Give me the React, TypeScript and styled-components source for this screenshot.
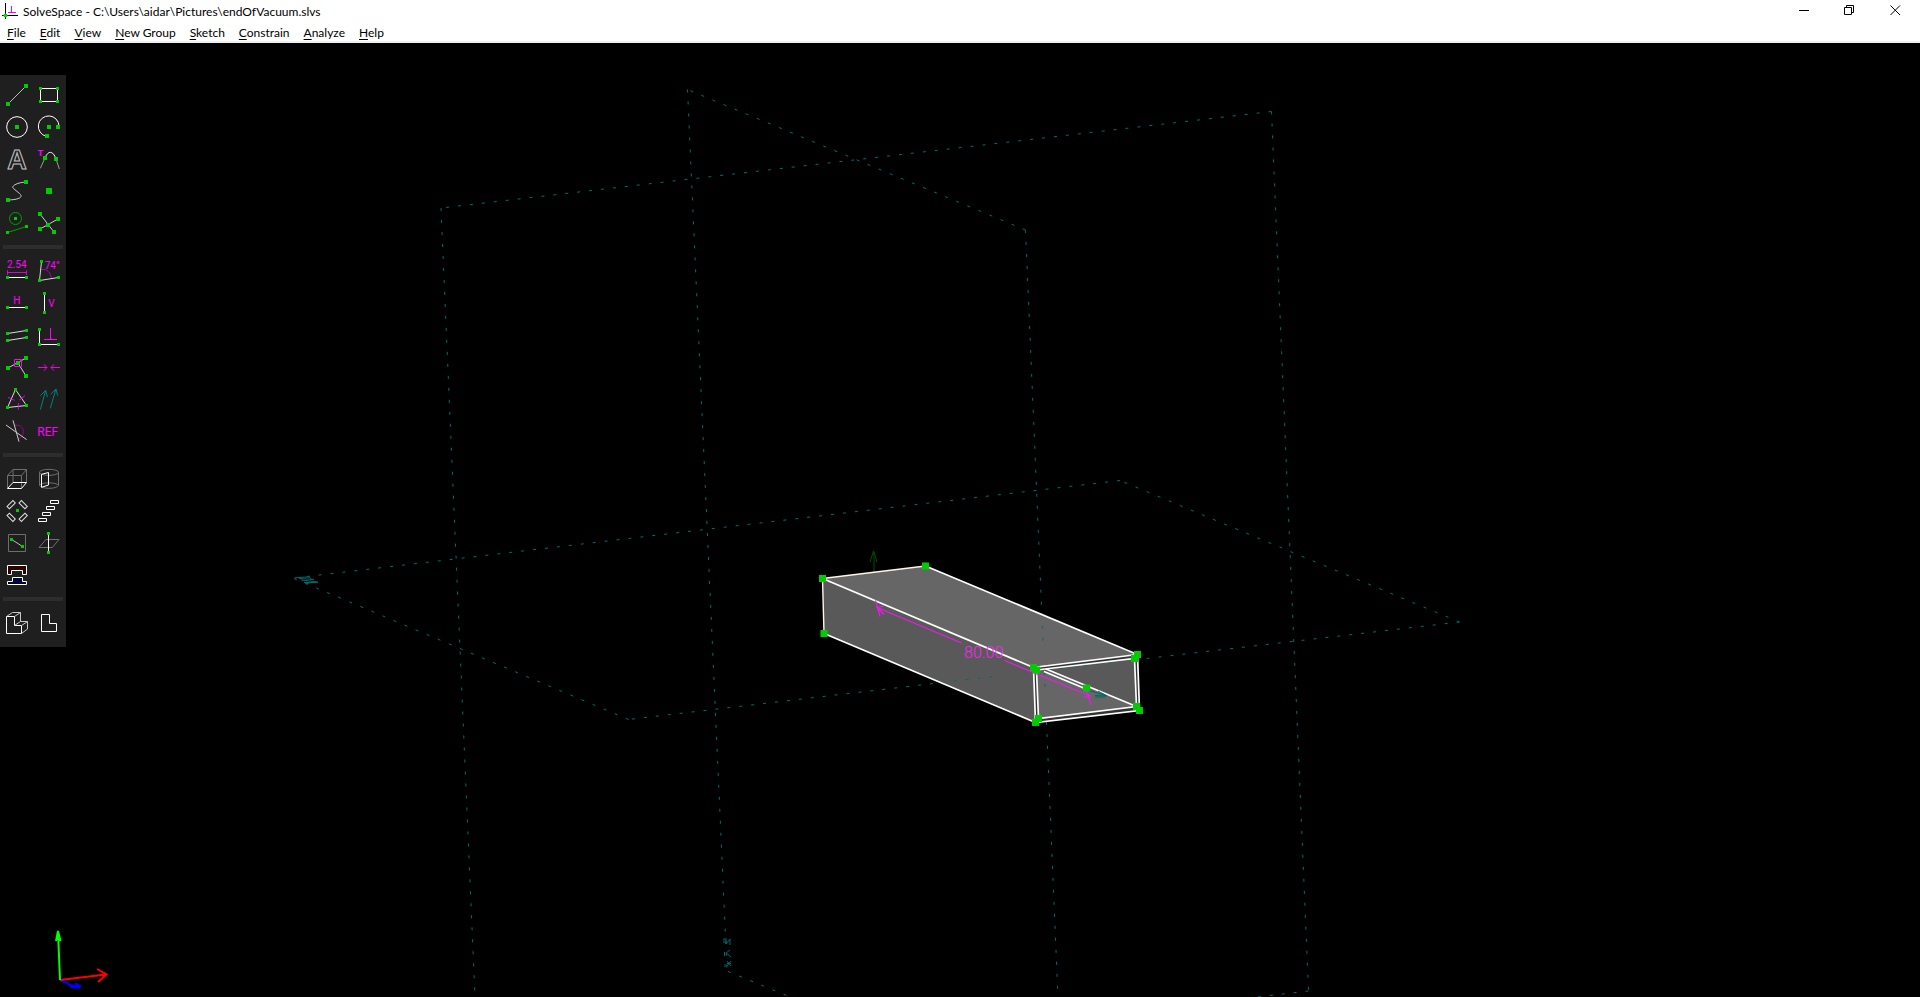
import React from "react";
import styled, { createGlobalStyle } from "styled-components";

const GREEN = "#00cc00";
const MAGENTA = "#ff00ff";
const PURPLE = "#960096";
const TEAL = "#008080";
const GREY = "#6e6e6e";

const GlobalStyle = createGlobalStyle`
  *, *::before, *::after { box-sizing: border-box; }
  body { margin: 0; background: #000; }
  button { font: inherit; color: inherit; background: none; border: 0; padding: 0; }
`;

const Window = styled.div`
  display: flex;
  flex-direction: column;
  min-height: 100vh;
  background: #fff;
  color: #000;
  font-family: Lato, "Open Sans", sans-serif;
  font-size: 12px;
  line-height: 16px;
`;

const TitleBar = styled.header`
  display: flex;
  align-items: center;
  height: 24px;
  padding: 0 2px;
`;

const AppTitle = styled.h1`
  flex: 1;
  margin: 0 0 0 5px;
  font: inherit;
  white-space: nowrap;
`;

const WindowButton = styled.button`
  display: grid;
  place-items: center;
  width: 46px;
  height: 20px;
  margin-bottom: 4px;
`;

const MenuBar = styled.nav`
  display: flex;
  align-items: center;
  height: 19px;
  border-bottom: 2px solid #f0f0f0;
`;

const MenuButton = styled.button`
  padding: 0 7px;
  height: 17px;
  white-space: nowrap;
`;

const AccessKey = styled.span`
  text-decoration: underline;
  text-decoration-thickness: 1px;
  text-underline-offset: 2px;
`;

const Viewport = styled.main`
  position: relative;
  flex: 1;
  display: flex;
  flex-direction: column;
  justify-content: space-between;
  align-items: flex-start;
  gap: 32px;
  padding-top: 32px;
  background: #000;
  overflow: hidden;
`;

const Scene = styled.svg`
  position: absolute;
  inset: 0;
  width: 100%;
  height: 100%;
`;

const Toolbar = styled.div`
  position: relative;
  width: 66px;
  padding: 4px 1px 8px;
  background: #1f1f1f;
`;

const ToolGroup = styled.div`
  display: grid;
  grid-template-columns: 32px 32px;
`;

const Separator = styled.hr`
  height: 4px;
  margin: 6px 2px;
  border: 0;
  background: #2d2d2d;
`;

const ToolButton = styled.button`
  width: 32px;
  height: 32px;

  svg {
    display: block;
  }
`;

const AxisGizmo = styled.svg`
  position: relative;
  display: block;
  margin: 0 0 1px 50px;
`;

/* Tool icons are drawn on a 96-unit grid, three units to a pixel. */

type Pt = [number, number];

const Dots = ({ at, size = 12 }: { at: Pt[]; size?: number }) => (
  <>
    {at.map(([x, y]) => (
      <rect key={`${x},${y}`} x={x - size / 2} y={y - size / 2} width={size} height={size} fill={GREEN} stroke="none" shapeRendering="crispEdges" />
    ))}
  </>
);

const Label = ({ x, y, size = 30, children }: { x: number; y: number; size?: number; children: string }) => (
  <text x={x} y={y} fontSize={size} fontWeight="400" fill={MAGENTA} stroke="none" fontFamily="Roboto, sans-serif">
    {children}
  </text>
);

type Tool = { name: string; icon: React.ReactNode };

const groups: Tool[][] = [
  [
    { name: "Line segment", icon: <><path d="M21 75 75 21" stroke="#bbb" /><Dots at={[[21, 75], [75, 21]]} /></> },
    { name: "Rectangle", icon: <><path d="M22.5 28.5h51v39h-51z" /><Dots size={9} at={[[22.5, 28.5], [73.5, 28.5], [22.5, 67.5], [73.5, 67.5]]} /></> },
    { name: "Circle", icon: <><circle cx="48" cy="48" r="31" /><Dots at={[[48, 48]]} /></> },
    { name: "Arc", icon: <><path d="M78 45A31 31 0 1 0 40 76" /><Dots at={[[48, 48], [75, 48], [42, 75]]} /></> },
    {
      name: "Text in TrueType font",
      icon: (
        <text x="19" y="79" fontSize="81" fontWeight="700" stroke="#c4c4c4" fontFamily="Liberation Sans, sans-serif">
          A
        </text>
      ),
    },
    {
      name: "Tangent arc",
      icon: (
        <>
          <text x="14" y="40" fontSize="27" fontWeight="700" fill={MAGENTA} stroke="none" fontFamily="Liberation Sans, sans-serif">T</text>
          <path d="M22 76 36 45" stroke="#999" />
          <path d="M36 45C45 22 60 22 69 48" />
          <path d="M69 48 79 78" stroke="#999" />
          <Dots at={[[36, 45], [69, 48]]} />
        </>
      ),
    },
    { name: "Bezier spline", icon: <><path d="M75 21C45 23 30 34 37 40L56 56C66 64 60 74 21 75" stroke="#c8c8c8" /><Dots at={[[75, 21], [21, 75]]} /></> },
    { name: "Point", icon: <Dots size={18} at={[[48, 48]]} /> },
    { name: "Toggle construction", icon: <><g stroke="#00a000"><circle cx="43.5" cy="34.5" r="18" /><path d="M19.5 76.5 76.5 58.5" /></g><Dots size={9} at={[[43.5, 34.5], [19.5, 76.5], [76.5, 58.5]]} /></> },
    { name: "Split curves", icon: <><path d="M21 21 63 75M21 66 75 36" stroke="#ccc" /><Dots at={[[21, 21], [75, 36], [21, 66], [63, 75], [45, 54]]} /></> },
  ],
  [
    {
      name: "Distance",
      icon: (
        <>
          <Label x={18} y={40}>2.54</Label>
          <path d="M19.5 52.5h57M19.5 46v14M76.5 46v14" stroke={MAGENTA} strokeOpacity=".8" />
          <path d="M19.5 67.5h57" />
          <Dots size={9} at={[[19.5, 67.5], [76.5, 67.5]]} />
        </>
      ),
    },
    {
      name: "Angle",
      icon: (
        <>
          <path d="M24 44C42 40 54 54 55 71" stroke="#b000b0" />
          <path d="M25.5 19.5 19.5 76.5 76.5 67.5" stroke="#d8d8d8" />
          <Label x={35} y={42}>74°</Label>
          <Dots size={9} at={[[25.5, 19.5], [19.5, 76.5], [76.5, 67.5]]} />
        </>
      ),
    },
    { name: "Horizontal", icon: <><Label x={37} y={52}>H</Label><path d="M19.5 61.5h57" /><Dots size={9} at={[[19.5, 61.5], [76.5, 61.5]]} /></> },
    { name: "Vertical", icon: <><path d="M34.5 19.5v57" /><Label x={46} y={61}>V</Label><Dots size={9} at={[[34.5, 19.5], [34.5, 76.5]]} /></> },
    { name: "Parallel", icon: <><path d="M19.5 43.5 76.5 34.5M19.5 64.5 76.5 55.5" stroke="#ddd" /><Dots size={9} at={[[19.5, 43.5], [76.5, 34.5], [19.5, 64.5], [76.5, 55.5]]} /></> },
    { name: "Perpendicular", icon: <><path d="M19.5 31.5v45h57" /><path d="M52.5 27v34.5M33 61.5h39" stroke={MAGENTA} /><Dots size={9} at={[[19.5, 31.5], [19.5, 76.5], [76.5, 76.5]]} /></> },
    { name: "Point on entity", icon: <><path d="M21 51 75 21M51 36 75 75" stroke="#ccc" /><path d="M40.5 25.5h21v21h-21z" stroke={MAGENTA} /><Dots at={[[21, 51], [75, 21], [51, 36], [75, 75]]} /></> },
    { name: "Symmetric", icon: <path d="M15 49.5h27M33 40l9 9.5-9 9.5M81 49.5H54M63 40l-9 9.5 9 9.5" stroke={MAGENTA} strokeOpacity=".9" /> },
    { name: "Equal", icon: <><path d="M43.5 19.5 19.5 73.5 76.5 67.5z" stroke="#ddd" /><path d="M21 43 41 52M55 51 72 38M52 60v20" stroke={MAGENTA} strokeOpacity=".85" /><Dots size={9} at={[[43.5, 19.5], [19.5, 73.5], [76.5, 67.5]]} /></> },
    { name: "Same orientation", icon: <path d="M22 80 38 22M22 38 38 22 43 42M52 76 69 18M53 34 69 18 74 38" stroke={TEAL} /> },
    { name: "Other supplementary angle", icon: <><path d="M40 31C72 24 76 66 51 72" stroke={PURPLE} /><path d="M15 30 77 74M36 16 54 80" stroke="#ccc" /></> },
    { name: "Reference dimension", icon: <Label x={13} y={62} size={36}>REF</Label> },
  ],
  [
    {
      name: "Extrude",
      icon: (
        <>
          <path d="M19.5 76V37.5L36 19.5H76.5V58M19.5 37.5H61.5L76.5 19.5M61.5 37.5V76M36 19.5V58" stroke={GREY} />
          <path d="M19.5 76.5H61.5L76.5 58.5H36z" />
        </>
      ),
    },
    {
      name: "Revolve",
      icon: (
        <>
          <g stroke={GREY}>
            <ellipse cx="48" cy="28" rx="28.5" ry="9" />
            <path d="M19.5 28V67C24 79 72 79 76.5 67V28M19.5 67C26 57 70 57 76.5 67" />
          </g>
          <path d="M25.5 34 46.5 28.5V66L25.5 73z" />
        </>
      ),
    },
    {
      name: "Step and repeat rotating",
      icon: (
        <>
          <g stroke="#e0e0e0">
            <rect x="18" y="24" width="25" height="10" transform="rotate(-45 30.5 29)" />
            <rect x="54" y="24" width="25" height="10" transform="rotate(45 66.5 29)" />
            <rect x="18" y="62" width="25" height="10" transform="rotate(45 30.5 67)" />
            <rect x="54" y="62" width="25" height="10" transform="rotate(-45 66.5 67)" />
          </g>
          <Dots size={9} at={[[49.5, 46.5]]} />
        </>
      ),
    },
    { name: "Step and repeat translating", icon: <path d="M52.5 16.5h24v9h-24zM40.5 34.5h24v9h-24zM28.5 52.5h24v9h-24zM16.5 70.5h24v9h-24z" /> },
    { name: "Sketch in workplane", icon: <><path d="M22.5 22.5h51v51h-51z" stroke={GREY} /><path d="M31 37 64 58" stroke="#bbb" /><Dots size={9} at={[[31.5, 37.5], [64.5, 58.5]]} /></> },
    { name: "Sketch in 3D", icon: <><path d="M18 61.5 39 37.5H78L58 61.5z" stroke={GREY} /><path d="M46.5 19.5v57" /><Dots size={9} at={[[46.5, 19.5], [46.5, 76.5]]} /></> },
    {
      name: "Import assembly part",
      icon: (
        <>
          <path d="M19.5 19.5H76.5V46.5H64.5V34.5H31.5V46.5H19.5z" fill="#300000" />
          <path d="M19.5 76.5H76.5V67.5H64.5V55.5H34.5V67.5H19.5z" fill="#000040" />
        </>
      ),
    },
  ],
  [
    {
      name: "Nearest isometric view",
      icon: (
        <>
          <path d="M16.5 28.5H40.5V55.5H61.5V79.5H16.5z" />
          <path d="M16.5 28.5 34.5 16.5H58.5V43.5H79.5V66L61.5 79.5M40.5 28.5 58.5 16.5M40.5 55.5 58.5 43.5M61.5 55.5 79.5 43.5" stroke="#c8c8c8" />
        </>
      ),
    },
    { name: "Align view to workplane", icon: <path d="M25.5 22.5H49.5V49.5H70.5V73.5H25.5z" /> },
  ],
];

const menus = ["File", "Edit", "View", "New Group", "Sketch", "Constrain", "Analyze", "Help"];

/* Edges of the three reference planes, split where the solid hides them. */
const planeEdges = [
  "M1271.5 111.5 441 208",
  "M441 208 476 1020",
  "M1271.5 111.5 1308.5 991",
  "M1308.5 991 1180 1006",
  "M1025.5 230 687.5 89.5",
  "M687.5 89.5 727 970",
  "M1025.5 230 1043 641",
  "M1044.5 672 1045 689",
  "M1046.5 722 1058.5 1010",
  "M728 971.5 800 1001",
  "M1120 480.5 294 578",
  "M1459.5 622 1120 480.5",
  "M1459.5 622 1142 659",
  "M1111 662.5 1042 670.5",
  "M992.5 676.5 628.5 719.5",
  "M294 578.5 628.5 719.5",
];

const vertices: Pt[] = [
  [822.5, 578.5], [925.5, 566], [1137.5, 654.5], [1134.5, 658.5], [1033.5, 667.5], [1036.5, 670],
  [824, 633.5], [1035.5, 722.5], [1038.5, 718.5], [1136.5, 706.5], [1139.5, 710.5], [1086.5, 688],
];

const Model = () => (
  <Scene viewBox="0 43 1920 954" fill="none" role="img" aria-label="Extruded rectangular tube, 80.00 long">
    <path d="M874 572V552M870 562 873.5 551 877 562" stroke="#005000" />

    <path d="M822.5 578.5 925.5 566 1137.5 654.5 1033.5 667.5z" fill="#666" />
    <path d="M822.5 578.5 1033.5 667.5 1035.5 722.5 824 633.5z" fill="#595959" />
    <path d="M1033.5 667.5 1137.5 654.5 1139.5 710.5 1035.5 722.5z" fill="#333" />
    <path d="M1036.5 670 1134.5 658.5 1136.5 706.5 1038.5 718.5z" fill="#666" />
    <path d="M1042 669.5 1134.5 658.5 1136.5 706.5z" fill="#595959" />

    <g stroke="#006e6e">
      {planeEdges.map((d) => <path key={d} d={d} strokeDasharray="3 9" />)}
    </g>

    <g stroke="#fff" strokeWidth="1.7">
      <path d="M822.5 578.5 925.5 566M822.5 578.5 824 633.5" stroke="#fff4e8" strokeWidth="1.4" />
      <path d="M925.5 566 1137.5 654.5 1139.5 710.5 1035.5 722.5 1033.5 667.5 1137.5 654.5" />
      <path d="M822.5 578.5 1033.5 667.5M824 633.5 1035.5 722.5" />
      <path d="M1036.5 670 1134.5 658.5 1136.5 706.5 1038.5 718.5z" />
      <path d="M1046 669 1136.5 706.5M1044 671.5 1086 689" />
    </g>

    <g stroke="#006a6a">
      <path d="M1088 690 1107 696M1095 695.5 1107 696 1098 691M1095 697H1105" />
      <path d="M297 577.5 310 577M299 578.5 314 579.5M301 580 318 582M304 582.5H318M308 576 312 580M306 584 312 582" />
      <path d="M724 938V943M726 938 726 944 730 939V945M724.5 952V956M730 950 726 953 731 957M725 964V967M727 961 731 966M731 961 727 966M727 963.5H731" />
    </g>

    <g stroke="#f018f0" strokeWidth="1.2">
      <path d="M961.5 643 877 607.5M875.5 600.5 880 616.5M884 614.5 877 607.5 883.5 606" />
      <path d="M1004.5 660.5 1090 696M1086 689 1091 705M1084 697.5 1090 696 1085 690.5" />
    </g>
    <text x="964" y="658" fill="#ff20ff" fontSize="16" fontWeight="300" fontFamily="Roboto, sans-serif">80.00</text>

    {vertices.map(([x, y]) => (
      <rect key={`${x},${y}`} x={x - 3.5} y={y - 3.5} width="7" height="7" fill={GREEN} />
    ))}
  </Scene>
);

export default function App() {
  return (
    <Window>
      <GlobalStyle />
      <TitleBar>
        <svg width="16" height="18" fill="none" aria-hidden="true">
          <path d="M3.5 0V16M0 12.5H16" stroke="#000" />
          <path d="M9.5 3V9M6 9.5H14" stroke={MAGENTA} />
          <circle cx="3.5" cy="12.5" r="2" fill="#00dd00" />
        </svg>
        <AppTitle>SolveSpace - C:\Users\aidar\Pictures\endOfVacuum.slvs</AppTitle>
        <WindowButton aria-label="Minimize">
          <svg width="11" height="11" stroke="#000"><path d="M1 5.5H11" /></svg>
        </WindowButton>
        <WindowButton aria-label="Restore">
          <svg width="11" height="11" stroke="#000" fill="none"><path d="M.5 2.5H7.5V9.5H.5zM2.5 2.5V.5H9.5V7.5H7.5" /></svg>
        </WindowButton>
        <WindowButton aria-label="Close">
          <svg width="11" height="11" stroke="#000"><path d="M.5 .5 10 10M10 .5 .5 10" /></svg>
        </WindowButton>
      </TitleBar>
      <MenuBar>
        {menus.map((m) => (
          <MenuButton key={m}><AccessKey>{m[0]}</AccessKey>{m.slice(1)}</MenuButton>
        ))}
      </MenuBar>
      <Viewport>
        <Model />
        <Toolbar role="toolbar" aria-label="Sketch tools">
          {groups.map((tools, i) => (
            <React.Fragment key={i}>
              {i > 0 && <Separator />}
              <ToolGroup>
                {tools.map((t) => (
                  <ToolButton key={t.name} aria-label={t.name}>
                    <svg width="32" height="32" viewBox="0 0 96 96" fill="none" stroke="#fff" strokeWidth="3">{t.icon}</svg>
                  </ToolButton>
                ))}
              </ToolGroup>
            </React.Fragment>
          ))}
        </Toolbar>
        <AxisGizmo width="64" height="68" viewBox="50 928 64 68" fill="none" strokeWidth="2" aria-hidden="true">
          <path d="M60 980 69 984M68 984.5 80 987.5M70 987 80 987.5M75 983.5 81 986.5" stroke="#0000ff" />
          <path d="M60 980 106 974.5M97 969 106.5 974.5 98 982" stroke="#ff0000" />
          <path d="M60 980 58 932M56 941 58 931 60.5 941" stroke="#00ff00" />
        </AxisGizmo>
      </Viewport>
    </Window>
  );
}
